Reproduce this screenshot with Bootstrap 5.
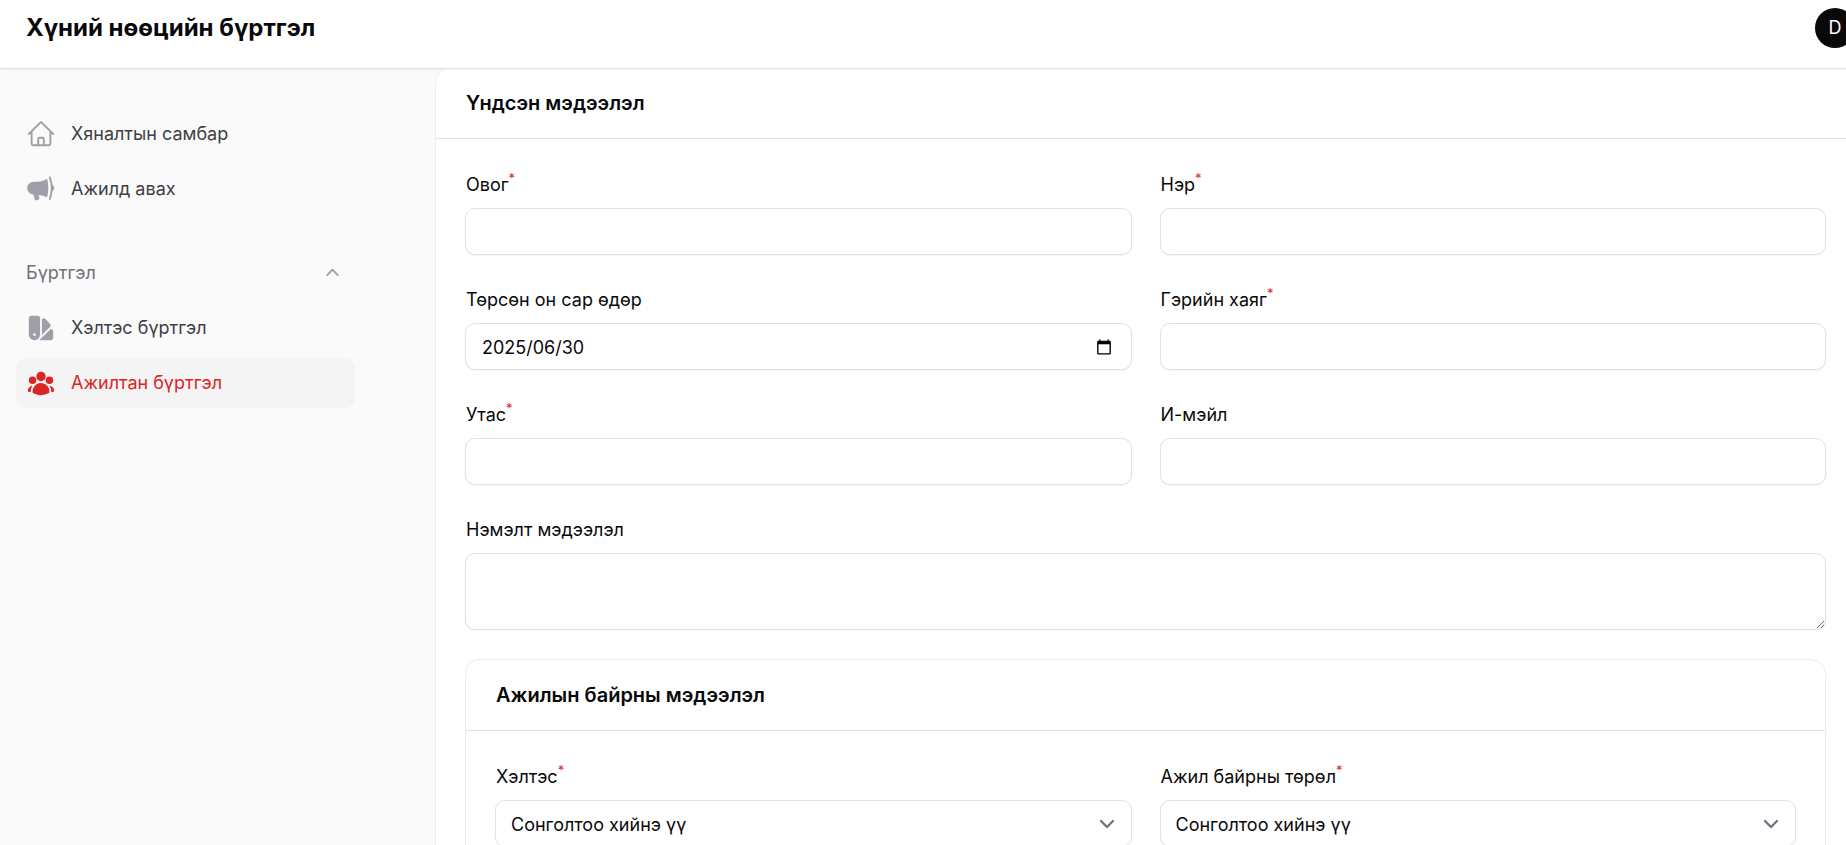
<!DOCTYPE html>
<html lang="mn">
<head>
<meta charset="utf-8">
<meta name="viewport" content="width=device-width, initial-scale=1">
<title>Хүний нөөцийн бүртгэл</title>
<link href="https://cdn.jsdelivr.net/npm/bootstrap@5.3.0/dist/css/bootstrap.min.css" rel="stylesheet">
<style>
  :root { --ink: #09090b; --line: #e2e2e4; --line-soft: #ededee; --muted: #9f9fa9; }
  body { font-family: Inter, "Noto Sans", sans-serif; font-size: 18px; line-height: 30px; color: var(--ink); background: #fafafa; }

  /* The shell runs slightly wider than the window, so its right edge is clipped */
  .app-shell { width: calc(100% + 10px); }
  .topbar { height: 69px; padding: 8px 1px 20px 26px; border-bottom: 1px solid var(--line); box-shadow: 0 1px 2px rgba(0,0,0,.06); z-index: 2; }
  .brand { font-size: 24px; line-height: 40px; font-weight: 700; color: var(--ink); }
  .avatar { width: 40px; height: 40px; background: var(--ink); font-size: 18px; line-height: 40px; }

  .sidebar { width: 435px; padding: 40px 80px 40px 16px; }
  .side-list { display: grid; gap: 5px; }
  .side-link { display: flex; align-items: center; gap: 15px; padding: 10px; border-radius: 10px; color: #3f3f46; text-decoration: none; }
  .side-link svg { width: 30px; height: 30px; color: var(--muted); flex: none; }
  .side-link.active { background: #f4f4f4; color: #dc2626; }
  .side-link.active svg { color: #dc2626; }
  .side-group { margin-top: 34px; }
  .side-toggle { padding: 10px; font-size: 18px; line-height: 30px; color: #71717b; }
  .side-toggle svg { width: 25px; height: 25px; color: var(--muted); }

  .content { overflow-y: auto; scrollbar-width: none; }
  .content::-webkit-scrollbar { display: none; }
  .panel { border: 1px solid var(--line-soft); border-radius: 15px; background: #fff; }
  .panel-outer { margin-top: -2px; }
  .panel-head { padding: 20px 30px; border-bottom: 1px solid var(--line); }
  .panel-head h2 { font-size: 20px; line-height: 30px; font-weight: 600; }
  .panel-body { padding: 30px 29px; }
  .fields { --bs-gutter-x: 28px; --bs-gutter-y: 29px; }
  .form-label { margin: 0; padding: 1px 0 8px 1px; display: block; }
  .form-label sup { color: #dc2626; font-size: 13px; top: -8px; line-height: 0; }
  .form-control, .form-select { height: 47px; padding: 8px 16px 6px; font-size: 18px; line-height: 30px; color: var(--ink); border-color: var(--line); border-radius: 10px; box-shadow: 0 1px 2px rgba(0,0,0,.05); }
  textarea.form-control { height: 77px; min-height: 77px; }
  .form-select { padding-left: 15px; --bs-form-select-bg-img: url("data:image/svg+xml,%3csvg xmlns='http://www.w3.org/2000/svg' fill='none' viewBox='0 0 20 20'%3e%3cpath stroke='%236b7280' stroke-linecap='round' stroke-linejoin='round' stroke-width='1.5' d='M6 8l4 4 4-4'/%3e%3c/svg%3e"); background-image: var(--bs-form-select-bg-img); background-size: 30px; background-position: right 9px center; }
  .date-open { right: 17px; top: 50%; transform: translateY(-50%); line-height: 0; }
</style>
</head>
<body>
<div class="vh-100 overflow-hidden">
<div class="app-shell vh-100 d-flex flex-column">
  <header class="topbar bg-white position-relative d-flex align-items-center justify-content-between flex-shrink-0">
    <a class="brand text-decoration-none" href="#">Хүний нөөцийн бүртгэл</a>
    <button type="button" class="avatar btn p-0 border-0 rounded-circle text-white">D</button>
  </header>

  <div class="d-flex flex-grow-1 overflow-hidden">
    <nav class="sidebar flex-shrink-0 d-none d-md-block">
      <div class="side-list">
        <a class="side-link" href="#">
          <svg viewBox="0 0 24 24" fill="none" stroke="currentColor" stroke-width="1.5" stroke-linecap="round" stroke-linejoin="round"><path d="m2.25 12 8.954-8.955c.44-.439 1.152-.439 1.591 0L21.75 12M4.5 9.75v10.125c0 .621.504 1.125 1.125 1.125H9.75v-4.875c0-.621.504-1.125 1.125-1.125h2.25c.621 0 1.125.504 1.125 1.125V21h4.125c.621 0 1.125-.504 1.125-1.125V9.75M8.25 21h8.25"/></svg>
          Хяналтын самбар
        </a>
        <a class="side-link" href="#">
          <svg viewBox="0 0 24 24" fill="currentColor"><path d="M16.900 3.700C14 5.500 10.800 6.200 6.200 6.200a5.100 5.100 0 0 0-.3 10.200c.2 1.300.6 2.500 1.100 3.700.5 1 1.500 1.200 2.400.7l.5-.3c.8-.5 1-1.400.7-2.200l-.6-1.500c2.400.3 4.700.9 6.900 1.800 1.300-5 1.300-10 0-14.900Z"/><path d="M18.300 2.800a.75.75 0 0 1 1.400-.5c.8 2.100 1.200 4.200 1.500 6.500 1.900 1.300 1.900 3.700 0 5a25 25 0 0 1-1.500 6.500.75.75 0 0 1-1.400-.5c2.100-5.700 2.100-11.300 0-17Z"/></svg>
          Ажилд авах
        </a>
      </div>
      <div class="side-group side-list">
        <button type="button" class="side-toggle btn border-0 d-flex align-items-center justify-content-between w-100" data-bs-toggle="collapse" data-bs-target="#registry" aria-expanded="true" aria-controls="registry">
          Бүртгэл
          <svg viewBox="0 0 20 20" fill="currentColor"><path fill-rule="evenodd" d="M9.47 6.47a.75.75 0 0 1 1.06 0l4.25 4.25a.75.75 0 1 1-1.06 1.06L10 8.06l-3.72 3.72a.75.75 0 0 1-1.06-1.06l4.25-4.25Z"/></svg>
        </button>
        <div class="collapse show" id="registry">
          <div class="side-list">
            <a class="side-link" href="#">
              <svg viewBox="0 0 24 24" fill="currentColor"><path fill-rule="evenodd" d="M2.25 4.125c0-1.036.84-1.875 1.875-1.875h5.25c1.036 0 1.875.84 1.875 1.875V17.25a4.5 4.5 0 1 1-9 0V4.125Zm4.5 14.25a1.125 1.125 0 1 0 0-2.25 1.125 1.125 0 0 0 0 2.25Z"/><path d="M10.719 21.75h9.156c1.036 0 1.875-.84 1.875-1.875v-5.25c0-1.036-.84-1.875-1.875-1.875h-.14l-8.742 8.743c-.09.089-.18.175-.274.257ZM12.738 17.625l6.474-6.474a1.875 1.875 0 0 0 0-2.651L15.5 4.787a1.875 1.875 0 0 0-2.651 0l-.1.099V17.25c0 .126-.003.251-.01.375Z"/></svg>
              Хэлтэс бүртгэл
            </a>
            <a class="side-link active" href="#" aria-current="page">
              <svg viewBox="0 0 24 24" fill="currentColor"><path fill-rule="evenodd" d="M8.25 6.75a3.75 3.75 0 1 1 7.5 0 3.75 3.75 0 0 1-7.5 0ZM15.75 9.75a3 3 0 1 1 6 0 3 3 0 0 1-6 0ZM2.25 9.75a3 3 0 1 1 6 0 3 3 0 0 1-6 0ZM6.31 15.117A6.745 6.745 0 0 1 12 12a6.745 6.745 0 0 1 6.709 7.498.75.75 0 0 1-.372.568A12.696 12.696 0 0 1 12 21.75c-2.305 0-4.47-.612-6.337-1.684a.75.75 0 0 1-.372-.568 6.787 6.787 0 0 1 1.019-4.38Z"/><path d="M5.082 14.254a8.287 8.287 0 0 0-1.308 5.135 9.687 9.687 0 0 1-1.764-.44l-.115-.04a.563.563 0 0 1-.373-.487l-.01-.121a3.75 3.75 0 0 1 3.57-4.047ZM20.226 19.389a8.287 8.287 0 0 0-1.308-5.135 3.75 3.75 0 0 1 3.57 4.047l-.01.121a.563.563 0 0 1-.373.486l-.115.04c-.567.2-1.156.349-1.764.441Z"/></svg>
              Ажилтан бүртгэл
            </a>
          </div>
        </div>
      </div>
    </nav>

    <main class="content flex-grow-1">
      <form class="panel panel-outer">
        <div class="panel-head"><h2 class="m-0">Үндсэн мэдээлэл</h2></div>
        <div class="panel-body">
          <div class="row fields mt-0">
            <div class="col-lg-6 mt-0">
              <label class="form-label" for="lastName">Овог<sup>*</sup></label>
              <input class="form-control" id="lastName" type="text" required>
            </div>
            <div class="col-lg-6 mt-0">
              <label class="form-label" for="firstName">Нэр<sup>*</sup></label>
              <input class="form-control" id="firstName" type="text" required>
            </div>
            <div class="col-lg-6">
              <label class="form-label" for="birthDate">Төрсөн он сар өдөр</label>
              <div class="position-relative">
                <input class="form-control" id="birthDate" type="text" inputmode="numeric" value="2025/06/30">
                <button type="button" class="date-open btn p-0 border-0 position-absolute" aria-label="Огноо сонгох">
                  <svg width="22" height="22" viewBox="0 0 24 24"><path d="M20 3h-1V1h-2v2H7V1H5v2H4c-1.100 0-2 .9-2 2v16c0 1.100.9 2 2 2h16c1.100 0 2-.9 2-2V5c0-1.100-.9-2-2-2zm0 18H4V8h16v13z" transform="translate(3 3) scale(.75)"/></svg>
                </button>
              </div>
            </div>
            <div class="col-lg-6">
              <label class="form-label" for="address">Гэрийн хаяг<sup>*</sup></label>
              <input class="form-control" id="address" type="text" required>
            </div>
            <div class="col-lg-6">
              <label class="form-label" for="phone">Утас<sup>*</sup></label>
              <input class="form-control" id="phone" type="tel" required>
            </div>
            <div class="col-lg-6">
              <label class="form-label" for="email">И-мэйл</label>
              <input class="form-control" id="email" type="email">
            </div>
            <div class="col-12">
              <label class="form-label" for="notes">Нэмэлт мэдээлэл</label>
              <textarea class="form-control" id="notes"></textarea>
            </div>
            <div class="col-12">
              <section class="panel">
                <div class="panel-head"><h2 class="m-0">Ажилын байрны мэдээлэл</h2></div>
                <div class="panel-body">
                  <div class="row fields mt-0">
                    <div class="col-lg-6 mt-0">
                      <label class="form-label" for="department">Хэлтэс<sup>*</sup></label>
                      <select class="form-select" id="department" required><option>Сонголтоо хийнэ үү</option></select>
                    </div>
                    <div class="col-lg-6 mt-0">
                      <label class="form-label" for="jobType">Ажил байрны төрөл<sup>*</sup></label>
                      <select class="form-select" id="jobType" required><option>Сонголтоо хийнэ үү</option></select>
                    </div>
                  </div>
                </div>
              </section>
            </div>
          </div>
        </div>
      </form>
    </main>
  </div>
</div>
</div>
<script src="https://cdn.jsdelivr.net/npm/bootstrap@5.3.0/dist/js/bootstrap.bundle.min.js"></script>
</body>
</html>
